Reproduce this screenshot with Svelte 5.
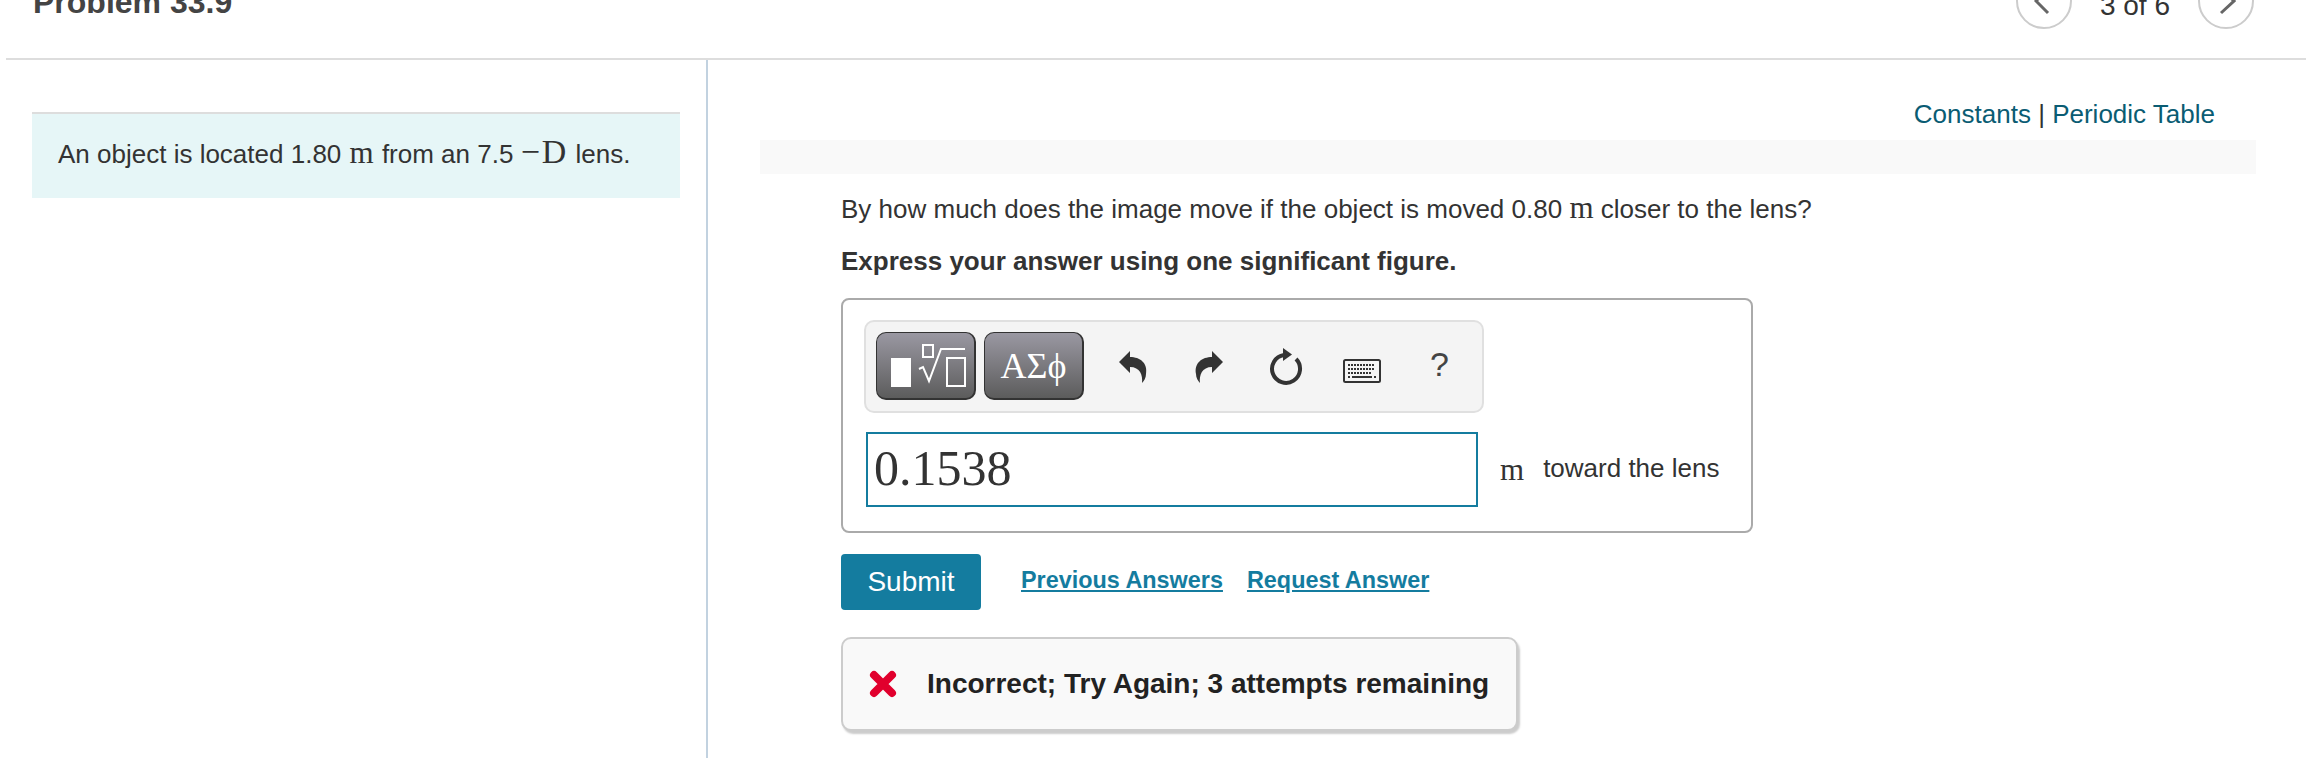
<script>
	const keyRows = [
		{ y: 5, xs: [5, 8, 11, 14, 17, 20, 23, 26, 29] },
		{ y: 9, xs: [5, 8, 11, 14, 17, 20, 23, 26, 29] },
		{ y: 13, xs: [5, 8, 11, 14, 17, 20, 23, 26] }
	];
</script>

<div class="page">
	<header class="topbar">
		<h1 class="title">Problem 33.9</h1>
		<nav class="pager">
			<span class="pager__btn">
				<svg width="20" height="30" viewBox="0 0 20 30"><path d="M14 3 L2 15 L14 27" fill="none" stroke="#666" stroke-width="3" /></svg>
			</span>
			<span class="pager__count">3 of 6</span>
			<span class="pager__btn">
				<svg width="20" height="30" viewBox="0 0 20 30"><path d="M5 3 L18 15 L5 27" fill="none" stroke="#666" stroke-width="3" /></svg>
			</span>
		</nav>
	</header>

	<main class="columns">
		<aside class="intro-col">
			<div class="intro">
				An object is located 1.80 <span class="math math--spaced">m</span> from an 7.5 <span class="math math--big">−D</span> lens.
			</div>
		</aside>

		<section class="part">
			<div class="refs">
				<a href="#c">Constants</a> <span class="refs__sep">|</span> <a href="#p">Periodic Table</a>
			</div>
			<div class="strip"></div>

			<div class="question">
				<p class="q">By how much does the image move if the object is moved 0.80 <span class="math">m</span> closer to the lens?</p>
				<p class="q q--bold">Express your answer using one significant figure.</p>

				<div class="answer">
					<div class="toolbar">
						<button class="tool tool--math" aria-label="templates">
							<svg width="76" height="46" viewBox="0 0 76 46">
								<rect x="0" y="14" width="20" height="29" fill="#fff" />
								<rect x="32" y="1" width="10" height="12" fill="none" stroke="#fff" stroke-width="2" />
								<path d="M28 25 L32 23 L38 37 L50 5 L74 5" fill="none" stroke="#fff" stroke-width="2" />
								<rect x="56" y="14" width="18" height="28" fill="none" stroke="#fff" stroke-width="2" />
							</svg>
						</button>
						<button class="tool tool--greek">ΑΣϕ</button>

						<svg class="icon icon--undo" width="30" height="34" viewBox="0 0 30 34"><path d="M1 12 L12 1 L12 7 C22 7 30 13 28 24 C28 28 26 31 24 33 C25 25 22 17 12 17 L12 23 Z" fill="#333" /></svg>
						<svg class="icon icon--redo" width="30" height="34" viewBox="0 0 30 34"><path d="M29 12 L18 1 L18 7 C8 7 0 13 2 24 C2 28 4 31 6 33 C5 25 8 17 18 17 L18 23 Z" fill="#333" /></svg>
						<svg class="icon icon--reload" width="36" height="38" viewBox="0 0 36 38">
							<path d="M17 7 A14 14 0 1 0 29 11" fill="none" stroke="#333" stroke-width="4" />
							<path d="M16 0 L25 6.500 L16 13 Z" fill="#333" />
						</svg>
						<svg class="icon icon--keys" width="38" height="24" viewBox="0 0 38 24">
							<rect x="1" y="1" width="36" height="22" rx="1.500" fill="#f4f4f4" stroke="#333" stroke-width="2" />
							{#each keyRows as row}
								{#each row.xs as x}
									<rect {x} y={row.y} width="2" height="2" fill="#333" />
								{/each}
							{/each}
							<rect x="9" y="17" width="20" height="2" fill="#333" />
							<rect x="5" y="17" width="2" height="2" fill="#333" />
							<rect x="31" y="17" width="2" height="2" fill="#333" />
						</svg>
						<span class="help">?</span>
					</div>

					<div class="entry">
						<div class="entry__field">0.1538</div>
						<span class="math entry__unit">m</span>
						<span class="entry__label">toward the lens</span>
					</div>
				</div>

				<div class="actions">
					<button class="submit">Submit</button>
					<a class="action-link" href="#prev">Previous Answers</a>
					<a class="action-link" href="#req">Request Answer</a>
				</div>

				<div class="feedback">
					<svg width="28" height="28" viewBox="0 0 28 28"><path d="M5 5 L23 23 M23 5 L5 23" fill="none" stroke="#e1002d" stroke-width="8" stroke-linecap="round" /></svg>
					<span class="feedback__text">Incorrect; Try Again; 3 attempts remaining</span>
				</div>
			</div>
		</section>
	</main>
</div>

<style>
	:global(body) {
		margin: 0;
		background: #fff;
	}

	.page {
		height: 758px;
		overflow: hidden;
		font-family: 'Liberation Sans', Arial, sans-serif;
		font-size: 26px;
		color: #333;
	}

	.topbar {
		height: 120px;
		margin: -60px 6px 0;
		padding: 0 52px 0 27px;
		box-sizing: border-box;
		border-bottom: 2px solid #ddd;
		display: flex;
		justify-content: space-between;
		align-items: flex-end;
	}

	.title {
		margin: 0 0 38px;
		font-size: 32px;
		line-height: 36px;
		font-weight: 700;
		color: #444;
	}

	.pager {
		display: flex;
		align-items: center;
		gap: 28px;
		margin-bottom: 29px;
	}

	.pager__btn {
		width: 56px;
		height: 56px;
		box-sizing: border-box;
		border: 2px solid #ccc;
		border-radius: 50%;
		display: flex;
		align-items: center;
		justify-content: center;
	}

	.pager__count {
		font-size: 28px;
		line-height: 32px;
		margin-top: 10px;
	}

	.columns {
		display: flex;
		height: 698px;
	}

	.intro-col {
		width: 708px;
		box-sizing: border-box;
		border-right: 2px solid #c2d2e0;
		padding: 52px 0 0 32px;
		flex: none;
	}

	.intro {
		width: 648px;
		height: 86px;
		box-sizing: border-box;
		border-top: 2px solid #ddd;
		background: #e6f6f7;
		padding-left: 26px;
		line-height: 80px;
		white-space: nowrap;
	}

	.math {
		font-family: 'Liberation Serif', 'Times New Roman', serif;
		font-size: 31px;
		line-height: 1;
	}

	.math--spaced {
		margin: 0 1px;
	}

	.math--big {
		font-size: 34px;
		letter-spacing: 2px;
	}

	.part {
		flex: 1;
		min-width: 0;
	}

	.refs {
		height: 80px;
		padding-right: 97px;
		box-sizing: border-box;
		padding-top: 38px;
		line-height: 32px;
		text-align: right;
	}

	.refs a {
		color: #0a5c73;
		text-decoration: none;
	}

	.strip {
		height: 34px;
		margin: 0 56px 0 52px;
		background: #f9f9f9;
	}

	.question {
		padding: 17px 0 0 133px;
	}

	.q {
		margin: 0 0 16px;
		line-height: 36px;
		white-space: nowrap;
	}

	.q--bold {
		font-weight: 700;
		margin-bottom: 19px;
	}

	.answer {
		width: 912px;
		height: 235px;
		box-sizing: border-box;
		border: 2px solid #aaa;
		border-radius: 8px;
		padding: 20px 0 0 21px;
	}

	.toolbar {
		width: 620px;
		height: 93px;
		box-sizing: border-box;
		border: 2px solid #e0e0e0;
		border-radius: 10px;
		background: #f4f4f4;
		padding: 10px 0 0 10px;
		display: flex;
		align-items: flex-start;
	}

	.tool {
		width: 100px;
		height: 68px;
		box-sizing: border-box;
		border: 1px solid #333;
		border-right-width: 2px;
		border-bottom-width: 2px;
		border-radius: 10px;
		background: linear-gradient(180deg, #9a98a2, #5c5c5c);
		color: #fff;
		padding: 0;
		display: flex;
		align-items: center;
		justify-content: center;
		margin-right: 8px;
	}

	.tool--math svg {
		margin-left: 6px;
		margin-top: 3px;
	}

	.tool--greek {
		font-family: 'Liberation Serif', serif;
		font-size: 36px;
	}

	.icon {
		flex: none;
	}

	.icon--undo {
		margin: 18px 0 0 26px;
	}

	.icon--redo {
		margin: 18px 0 0 46px;
	}

	.icon--reload {
		margin: 16px 0 0 43px;
	}

	.icon--keys {
		margin: 27px 0 0 40px;
	}

	.help {
		margin: 14px 0 0 49px;
		font-size: 34px;
		line-height: 36px;
		color: #444;
	}

	.entry {
		display: flex;
		align-items: center;
		margin: 19px 0 0 2px;
	}

	.entry__field {
		width: 612px;
		height: 75px;
		box-sizing: border-box;
		border: 2px solid #147c9f;
		padding-left: 6px;
		font-family: 'Liberation Serif', 'Times New Roman', serif;
		font-size: 50px;
		line-height: 69px;
		flex: none;
	}

	.entry__unit {
		margin-left: 22px;
	}

	.entry__label {
		margin: 0 0 2px 19px;
		white-space: nowrap;
	}

	.actions {
		display: flex;
		align-items: center;
		margin-top: 21px;
	}

	.submit {
		width: 140px;
		height: 56px;
		border: none;
		border-radius: 4px;
		background: #147c9f;
		color: #fff;
		font-family: inherit;
		font-size: 28px;
		padding: 0;
		margin-right: 40px;
	}

	.action-link {
		font-size: 23.4px;
		font-weight: 700;
		color: #147c9f;
		margin: -4px 24px 0 0;
	}

	.feedback {
		width: 677px;
		height: 94px;
		box-sizing: border-box;
		margin-top: 27px;
		border: 2px solid #ccc;
		border-radius: 10px;
		background: #f9f9f9;
		box-shadow: 2px 3px 2px #ccc;
		display: flex;
		align-items: center;
		padding-left: 26px;
		gap: 30px;
	}

	.feedback__text {
		font-size: 28px;
		font-weight: 700;
		color: #222;
		white-space: nowrap;
	}
</style>
